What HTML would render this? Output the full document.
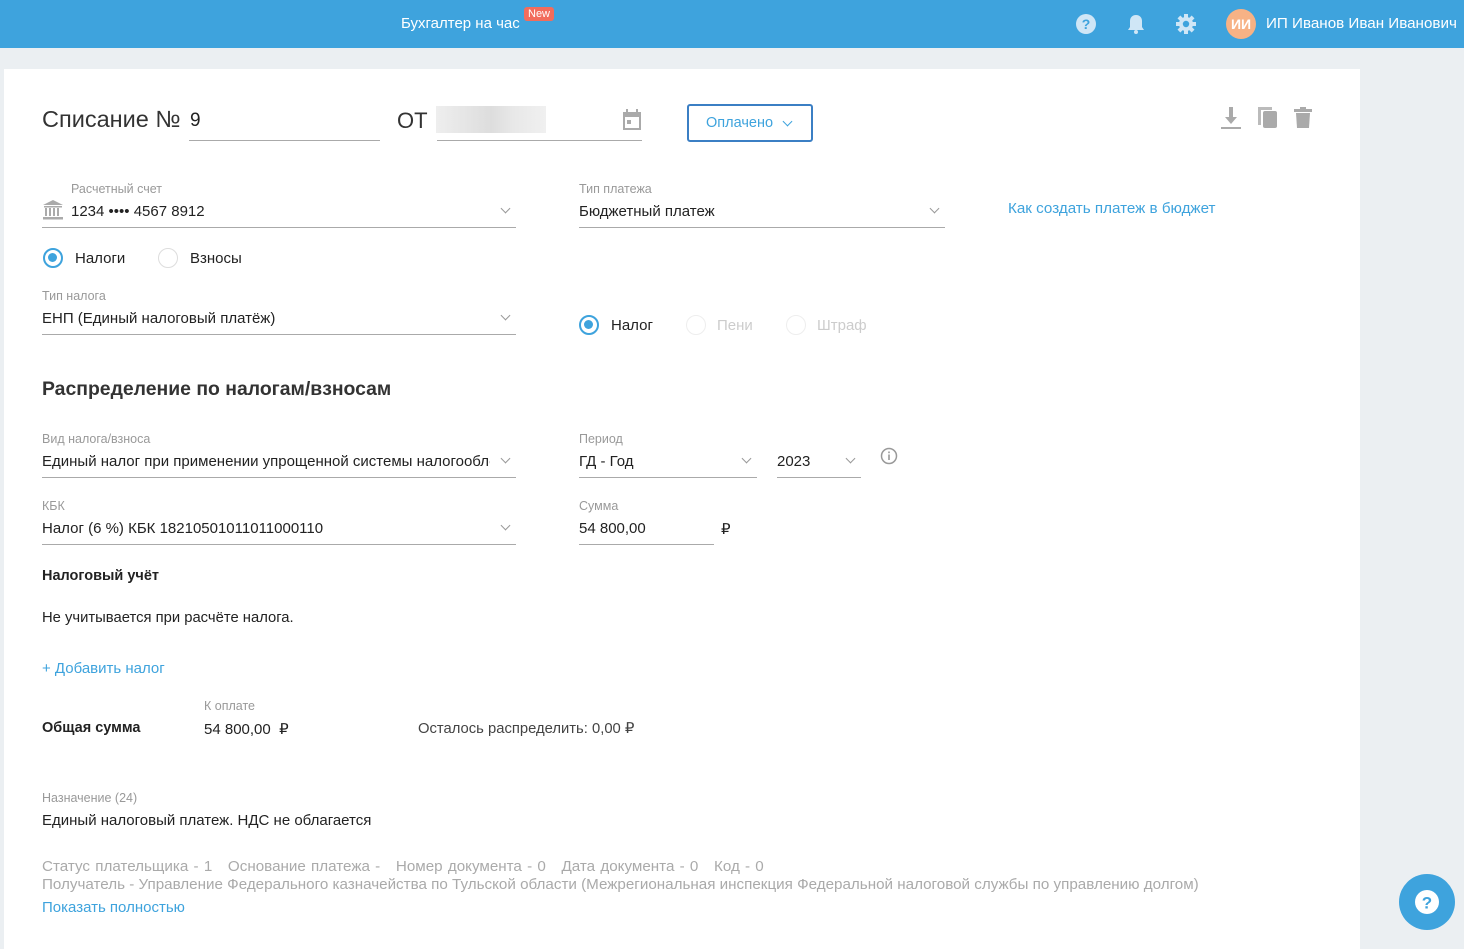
<!DOCTYPE html>
<html><head><meta charset="utf-8"><style>
*{margin:0;padding:0;box-sizing:border-box}
body{width:1464px;height:935px;overflow:hidden;background:#ebeff2;font-family:"Liberation Sans",sans-serif;color:#222;position:relative}
.a{position:absolute;white-space:nowrap}
.hdr{position:absolute;left:0;top:0;width:1464px;height:48px;background:#3ea3dd;color:#fff}
.card{position:absolute;left:4px;top:69px;width:1356px;height:880px;background:#fff}
.lbl{font-size:12.5px;color:#999}
.val{font-size:15px;color:#222}
.line{position:absolute;height:1px;background:#aaa}
.chev{position:absolute;width:7px;height:7px;border-right:1.6px solid #999;border-bottom:1.6px solid #999;transform:rotate(45deg)}
.rad{position:absolute;width:20px;height:20px;border-radius:50%;border:1.5px solid #ddd}
.rad.on{border:2.5px solid #3ea3dd}
.rad.on:after{content:"";position:absolute;left:3px;top:3px;width:9px;height:9px;border-radius:50%;background:#3ea3dd}
.gray{color:#aaa;font-size:15.2px}
.link{color:#3ea3dd}
</style></head><body>
<div class="hdr">
 <div class="a" style="left:401px;top:15px;font-size:15px">Бухгалтер на час</div>
 <div class="a" style="left:524px;top:7px;background:#f26c5c;color:#fff;font-size:11px;padding:1px 4px;border-radius:3px">New</div>
 <svg class="a" style="left:1075px;top:13px" width="22" height="22" viewBox="0 0 22 22"><circle cx="11" cy="11" r="10" fill="#cfe6f6"/><text x="11" y="16" font-size="14" font-weight="bold" text-anchor="middle" fill="#3ea3dd" font-family="Liberation Sans">?</text></svg>
 <svg class="a" style="left:1126px;top:13px" width="20" height="22" viewBox="0 0 20 22"><path d="M10 2c-4 0-6 3-6 6v6l-2 3h16l-2-3V8c0-3-2-6-6-6z" fill="#cfe6f6"/><circle cx="10" cy="19" r="2" fill="#cfe6f6"/></svg>
 <svg class="a" style="left:1175px;top:13px" width="22" height="22" viewBox="0 0 22 22"><g fill="#cfe6f6"><circle cx="11" cy="11" r="7"/><rect x="9" y="1" width="4" height="20"/><rect x="1" y="9" width="20" height="4"/><rect x="9" y="1" width="4" height="20" transform="rotate(45 11 11)"/><rect x="9" y="1" width="4" height="20" transform="rotate(-45 11 11)"/></g><circle cx="11" cy="11" r="3.2" fill="#3ea3dd"/></svg>
 <div class="a" style="left:1226px;top:9px;width:30px;height:30px;border-radius:50%;background:#f7b285;color:#fff;font-weight:bold;font-size:14px;text-align:center;line-height:30px">ИИ</div>
 <div class="a" style="left:1266px;top:15px;font-size:15.2px">ИП Иванов Иван Иванович</div>
</div>
<div class="card"></div>

<div class="a" style="left:42px;top:106px;font-size:23.5px;color:#333">Списание №</div>
<div class="a" style="left:190px;top:110px;font-size:19px">9</div>
<div class="line" style="left:189px;top:140px;width:191px"></div>
<div class="a" style="left:397px;top:108px;font-size:22px;color:#333">ОТ</div>
<div class="a" style="left:436px;top:106px;width:110px;height:27px;background:linear-gradient(90deg,#eee,#e4e4e4 30%,#ddd 50%,#e8e8e8 70%,#f0f0f0)"></div>
<div class="line" style="left:437px;top:140px;width:205px"></div>
<svg class="a" style="left:622px;top:109px" width="20" height="22" viewBox="0 0 20 22"><rect x="1" y="3" width="18" height="18" fill="#aaa"/><rect x="3" y="8" width="14" height="11" fill="#fff"/><rect x="5" y="11" width="4" height="4" fill="#aaa"/><rect x="4" y="0" width="2" height="4" fill="#aaa"/><rect x="14" y="0" width="2" height="4" fill="#aaa"/></svg>
<div class="a" style="left:687px;top:104px;width:126px;height:38px;border:2.5px solid #3b7fc4;border-radius:3px;color:#3ea3dd;font-size:14.5px;padding:9px 0 0 17px">Оплачено</div>
<div class="chev" style="left:784px;top:118px;border-color:#3ea3dd"></div>
<svg class="a" style="left:1220px;top:106px" width="22" height="24" viewBox="0 0 22 24"><path d="M9 1h4v10h4l-6 7-6-7h4z" fill="#aaa"/><rect x="1" y="21" width="20" height="2" fill="#aaa"/></svg>
<svg class="a" style="left:1257px;top:106px" width="22" height="24" viewBox="0 0 22 24"><path d="M1 3h3v16h-3z M1 1h14v3H1z" fill="#bbb"/><rect x="6" y="5" width="14" height="17" rx="2" fill="#aaa"/></svg>
<svg class="a" style="left:1294px;top:107px" width="18" height="22" viewBox="0 0 18 22"><rect x="0" y="2" width="18" height="3" fill="#aaa"/><rect x="6" y="0" width="6" height="3" fill="#aaa"/><path d="M2 6h14l-1 15H3z" fill="#aaa"/></svg>

<div class="a lbl" style="left:71px;top:182px">Расчетный счет</div>
<svg class="a" style="left:42px;top:200px" width="22" height="20" viewBox="0 0 22 20"><path d="M11 0L1 5h20z" fill="#aaa"/><g fill="#aaa"><rect x="2" y="6" width="18" height="1.5"/><rect x="3" y="8" width="2" height="8"/><rect x="7" y="8" width="2" height="8"/><rect x="11" y="8" width="2" height="8"/><rect x="15" y="8" width="2" height="8"/><rect x="1" y="17" width="20" height="2.5"/></g></svg>
<div class="a val" style="left:71px;top:203px">1234 •••• 4567 8912</div>
<div class="chev" style="left:502px;top:205px"></div>
<div class="line" style="left:42px;top:227px;width:474px"></div>
<div class="a lbl" style="left:579px;top:182px">Тип платежа</div>
<div class="a val" style="left:579px;top:203px">Бюджетный платеж</div>
<div class="chev" style="left:931px;top:205px"></div>
<div class="line" style="left:579px;top:227px;width:366px"></div>
<div class="a link" style="left:1008px;top:200px;font-size:15.2px">Как создать платеж в бюджет</div>

<div class="rad on" style="left:43px;top:248px"></div>
<div class="a val" style="left:75px;top:250px">Налоги</div>
<div class="rad" style="left:158px;top:248px"></div>
<div class="a val" style="left:190px;top:250px">Взносы</div>

<div class="a lbl" style="left:42px;top:289px">Тип налога</div>
<div class="a val" style="left:42px;top:310px">ЕНП (Единый налоговый платёж)</div>
<div class="chev" style="left:502px;top:312px"></div>
<div class="line" style="left:42px;top:334px;width:474px"></div>
<div class="rad on" style="left:579px;top:315px"></div>
<div class="a val" style="left:611px;top:317px">Налог</div>
<div class="rad" style="left:686px;top:315px;border-color:#eee"></div>
<div class="a val" style="left:717px;top:317px;color:#ccc">Пени</div>
<div class="rad" style="left:786px;top:315px;border-color:#eee"></div>
<div class="a val" style="left:817px;top:317px;color:#ccc">Штраф</div>

<div class="a" style="left:42px;top:378px;font-size:19.4px;font-weight:bold;color:#333">Распределение по налогам/взносам</div>

<div class="a lbl" style="left:42px;top:432px">Вид налога/взноса</div>
<div class="a val" style="left:42px;top:453px;width:448px;overflow:hidden">Единый налог при применении упрощенной системы налогообложения</div>
<div class="chev" style="left:502px;top:455px"></div>
<div class="line" style="left:42px;top:477px;width:474px"></div>
<div class="a lbl" style="left:579px;top:432px">Период</div>
<div class="a val" style="left:579px;top:453px">ГД - Год</div>
<div class="chev" style="left:743px;top:455px"></div>
<div class="line" style="left:579px;top:477px;width:178px"></div>
<div class="a val" style="left:777px;top:453px">2023</div>
<div class="chev" style="left:847px;top:455px"></div>
<div class="line" style="left:777px;top:477px;width:84px"></div>
<svg class="a" style="left:880px;top:447px" width="18" height="18" viewBox="0 0 18 18"><circle cx="9" cy="9" r="7.5" fill="none" stroke="#999" stroke-width="1.5"/><rect x="8.2" y="7.5" width="1.6" height="5.5" fill="#999"/><rect x="8.2" y="4.5" width="1.6" height="1.7" fill="#999"/></svg>

<div class="a lbl" style="left:42px;top:499px">КБК</div>
<div class="a val" style="left:42px;top:520px">Налог (6 %) КБК 18210501011011000110</div>
<div class="chev" style="left:502px;top:522px"></div>
<div class="line" style="left:42px;top:544px;width:474px"></div>
<div class="a lbl" style="left:579px;top:499px">Сумма</div>
<div class="a val" style="left:579px;top:520px">54 800,00</div>
<div class="a val" style="left:721px;top:520px">₽</div>
<div class="line" style="left:579px;top:544px;width:135px"></div>

<div class="a" style="left:42px;top:568px;font-size:14.5px;font-weight:bold">Налоговый учёт</div>
<div class="a val" style="left:42px;top:610px;font-size:14.8px">Не учитывается при расчёте налога.</div>
<div class="a link" style="left:42px;top:660px;font-size:15px">+ Добавить налог</div>

<div class="a lbl" style="left:204px;top:699px">К оплате</div>
<div class="a" style="left:42px;top:720px;font-size:14.5px;font-weight:bold">Общая сумма</div>
<div class="a val" style="left:204px;top:720px">54 800,00 &nbsp;₽</div>
<div class="a val" style="left:418px;top:720px;color:#444;font-size:14.8px">Осталось распределить: 0,00 ₽</div>

<div class="a lbl" style="left:42px;top:791px">Назначение (24)</div>
<div class="a val" style="left:42px;top:812px;font-size:15px">Единый налоговый платеж. НДС не облагается</div>
<div class="a gray" style="left:42px;top:858px;word-spacing:1px">Статус плательщика - 1 &nbsp;&nbsp;Основание платежа - &nbsp;&nbsp;Номер документа - 0 &nbsp;&nbsp;Дата документа - 0 &nbsp;&nbsp;Код - 0</div>
<div class="a gray" style="left:42px;top:876px">Получатель - Управление Федерального казначейства по Тульской области (Межрегиональная инспекция Федеральной налоговой службы по управлению долгом)</div>
<div class="a link" style="left:42px;top:899px;font-size:15px">Показать полностью</div>

<div class="a" style="left:1399px;top:874px;width:56px;height:56px;border-radius:50%;background:#3ea3dd"></div>
<svg class="a" style="left:1414px;top:889px" width="26" height="26" viewBox="0 0 26 26"><circle cx="13" cy="13" r="12" fill="#fff"/><text x="13" y="19.5" font-size="17" font-weight="bold" text-anchor="middle" fill="#3ea3dd" font-family="Liberation Sans">?</text></svg>
</body></html>
